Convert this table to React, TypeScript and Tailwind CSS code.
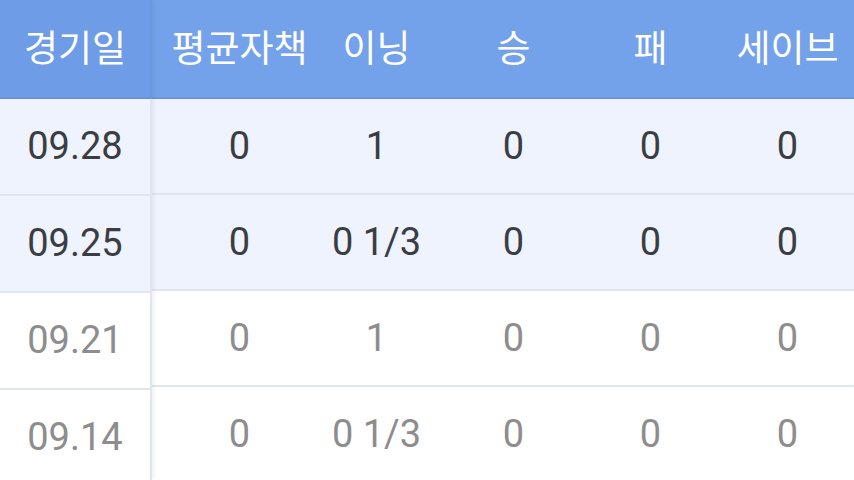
import React from "react";

type GameRow = {
  date: string;
  era: string;
  innings: string;
  win: string;
  loss: string;
  save: string;
  highlight: boolean;
};

const rows: GameRow[] = [
  { date: "09.28", era: "0", innings: "1", win: "0", loss: "0", save: "0", highlight: true },
  { date: "09.25", era: "0", innings: "0 1/3", win: "0", loss: "0", save: "0", highlight: true },
  { date: "09.21", era: "0", innings: "1", win: "0", loss: "0", save: "0", highlight: false },
  { date: "09.14", era: "0", innings: "0 1/3", win: "0", loss: "0", save: "0", highlight: false },
];

const headers = ["평균자책", "이닝", "승", "패", "세이브"];

const korean = { fontFamily: '"Noto Sans CJK KR", "Noto Sans", sans-serif' };
const numeric = { fontFamily: 'Roboto, "Noto Sans", sans-serif' };

const App = () => {
  return (
    <div className="flex w-[854px] h-[480px] overflow-hidden bg-white">
      {/* Fixed date column */}
      <div className="w-[152px] shrink-0 flex flex-col shadow-[2px_0_4px_rgba(0,0,0,0.06)] z-10">
        <div
          className="h-[99px] shrink-0 flex items-center justify-center pb-1 bg-[#6e9ce7] border-b-2 border-r-2 border-b-[#6792dc] border-r-[#6a97e0] text-white text-[37px] leading-none"
          style={korean}
        >
          경기일
        </div>
        {rows.map((row) => (
          <div
            key={row.date}
            className={`h-[97px] shrink-0 flex items-center justify-center border-b-2 border-r-2 border-[#e1e6ee] text-[38px] ${
              row.highlight ? "bg-[#eef3fd] text-[#3a3d42]" : "bg-white text-[#8d8d8d]"
            }`}
            style={numeric}
          >
            {row.date}
          </div>
        ))}
      </div>

      {/* Stats columns */}
      <div className="flex-1 flex flex-col">
        <div className="h-[99px] shrink-0 flex items-center pl-[19px] pb-1 bg-[#74a2ea] border-b-2 border-[#6a96dd]">
          {headers.map((h) => (
            <div
              key={h}
              className="w-[137px] shrink-0 text-center text-white text-[37px] leading-none whitespace-nowrap"
              style={korean}
            >
              {h}
            </div>
          ))}
        </div>
        {rows.map((row) => (
          <div
            key={row.date}
            className={`h-[96px] shrink-0 flex items-center pl-[19px] border-b-2 border-[#e1e6ee] text-[38px] ${
              row.highlight ? "bg-[#eef3fd] text-[#3a3d42]" : "bg-white text-[#8d8d8d]"
            }`}
            style={numeric}
          >
            {[row.era, row.innings, row.win, row.loss, row.save].map((v, i) => (
              <div key={i} className="w-[137px] shrink-0 text-center whitespace-nowrap">
                {v}
              </div>
            ))}
          </div>
        ))}
      </div>
    </div>
  );
};

export default App;
